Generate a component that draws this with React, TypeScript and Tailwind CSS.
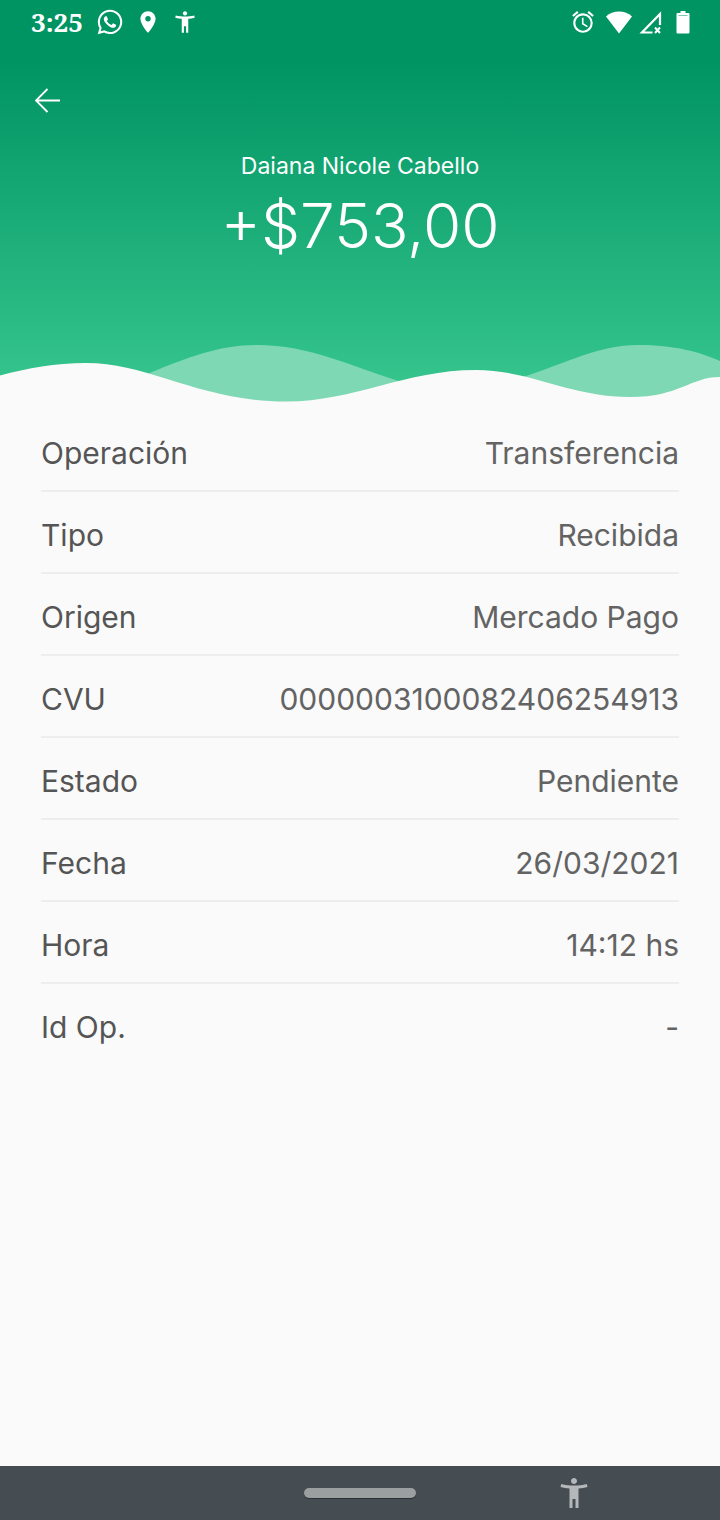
import { FaWhatsapp } from 'react-icons/fa';
import { MdAccessibilityNew, MdAlarm, MdLocationOn } from 'react-icons/md';

interface Detail {
  label: string;
  value: string;
}

const details: Detail[] = [
  { label: 'Operación', value: 'Transferencia' },
  { label: 'Tipo', value: 'Recibida' },
  { label: 'Origen', value: 'Mercado Pago' },
  { label: 'CVU', value: '0000003100082406254913' },
  { label: 'Estado', value: 'Pendiente' },
  { label: 'Fecha', value: '26/03/2021' },
  { label: 'Hora', value: '14:12 hs' },
  { label: 'Id Op.', value: '-' },
];

const WifiIcon = () => (
  <svg width="26" height="26" viewBox="0 0 26 26" fill="currentColor" aria-hidden="true">
    <path d="M13 24.5 0 7.5C3.5 4.300 8 2.5 13 2.5s9.5 1.800 13 5z" />
  </svg>
);

const NoSignalIcon = () => (
  <svg width="26" height="26" viewBox="0 0 26 26" fill="none" stroke="currentColor" aria-hidden="true">
    <path d="M14.5 23.5H4L22 5V16" strokeWidth="2.2" />
    <path d="m17 18.500 5 5.500m0-5.500-5 5.500" strokeWidth="2" />
  </svg>
);

const BatteryIcon = () => (
  <svg width="26" height="26" viewBox="0 0 26 26" aria-hidden="true">
    <path
      fill="currentColor"
      d="M10.500 2h5v2h3a1 1 0 0 1 1 1v18.500a1 1 0 0 1-1 1h-11a1 1 0 0 1-1-1V5a1 1 0 0 1 1-1h3z"
    />
    <path stroke="#7cc9ac" d="M8.500 6.500h9" />
  </svg>
);

const StatusBar = () => (
  <div className="flex h-11 items-center justify-between pl-[31px] pr-6">
    <div className="flex items-center gap-[11px]">
      <span className="mr-0.5 font-['Noto_Serif','Liberation_Serif',serif] text-[26px] leading-8 font-bold">3:25</span>
      <FaWhatsapp size={28} />
      <MdLocationOn size={26} />
      <MdAccessibilityNew size={26} />
    </div>
    <div className="flex items-center gap-1.5">
      <MdAlarm size={26} className="mr-1" />
      <WifiIcon />
      <NoSignalIcon />
      <BatteryIcon />
    </div>
  </div>
);

const Waves = () => (
  <svg
    className="mt-auto block h-[62px] w-full"
    viewBox="0 0 720 62"
    preserveAspectRatio="none"
    aria-hidden="true"
  >
    <path
      fill="#7dd8b3"
      d="M140 37C190 16 220 5 257 5C310 5 350 26 405 43V62H140ZM520 38C570 22 598 5 638 5C675 5 700 12 720 21V62H520Z"
    />
    <path
      fill="#fafafa"
      d="M0 35.500C28 28 55 23 86 23C150 23 200 61.500 286 61.500C355 61.500 405 30 476 30C530 30 570 57 630 57C680 57 690 37 720 37V62H0Z"
    />
  </svg>
);

const DetailRow = ({ label, value }: Detail) => (
  <div className="flex h-[82px] items-center justify-between border-b-2 border-[#ededed] pt-1.5 last:border-transparent">
    <dt className="text-[#555555]">{label}</dt>
    <dd className="text-[#636363]">{value}</dd>
  </div>
);

const App = () => {
  return (
    <div className="flex min-h-screen flex-col bg-[#fafafa] font-['Inter',sans-serif]">
      <header className="flex h-[402px] flex-col bg-linear-to-b/srgb from-[#009463] from-15% to-[#38c78f] text-white">
        <StatusBar />
        <button type="button" aria-label="Volver" className="mt-10 ml-8 flex size-8 items-center justify-center">
          <svg width="26" height="26" viewBox="0 0 26 26" fill="none" stroke="currentColor" aria-hidden="true">
            <path d="M25 13.500H1M12.500 2 1 13.500l11.500 11.500" strokeWidth="1.800" />
          </svg>
        </button>
        <div className="mt-8 text-center">
          <h1 className="text-[23px] leading-9">Daiana Nicole Cabello</h1>
          <p className="text-[62px] leading-[84px] font-light">+$753,00</p>
        </div>
        <Waves />
      </header>

      <main className="flex-1 px-[41px] pt-2">
        <dl className="text-[30px] leading-10">
          {details.map((detail) => (
            <DetailRow key={detail.label} {...detail} />
          ))}
        </dl>
      </main>

      {/* Barra de navegación del sistema */}
      <nav className="grid h-[54px] grid-cols-[1fr_auto_1fr] items-center bg-[#454d52]">
        <button
          type="button"
          aria-label="Inicio"
          className="col-start-2 h-2.5 w-28 rounded-full bg-[#9b9f9f] shadow-[0_1px_0_#2b3032]"
        />
        <button type="button" aria-label="Accesibilidad" className="ml-3 justify-self-center text-[#b4b8ba]">
          <MdAccessibilityNew size={36} />
        </button>
      </nav>
    </div>
  );
};

export default App;
